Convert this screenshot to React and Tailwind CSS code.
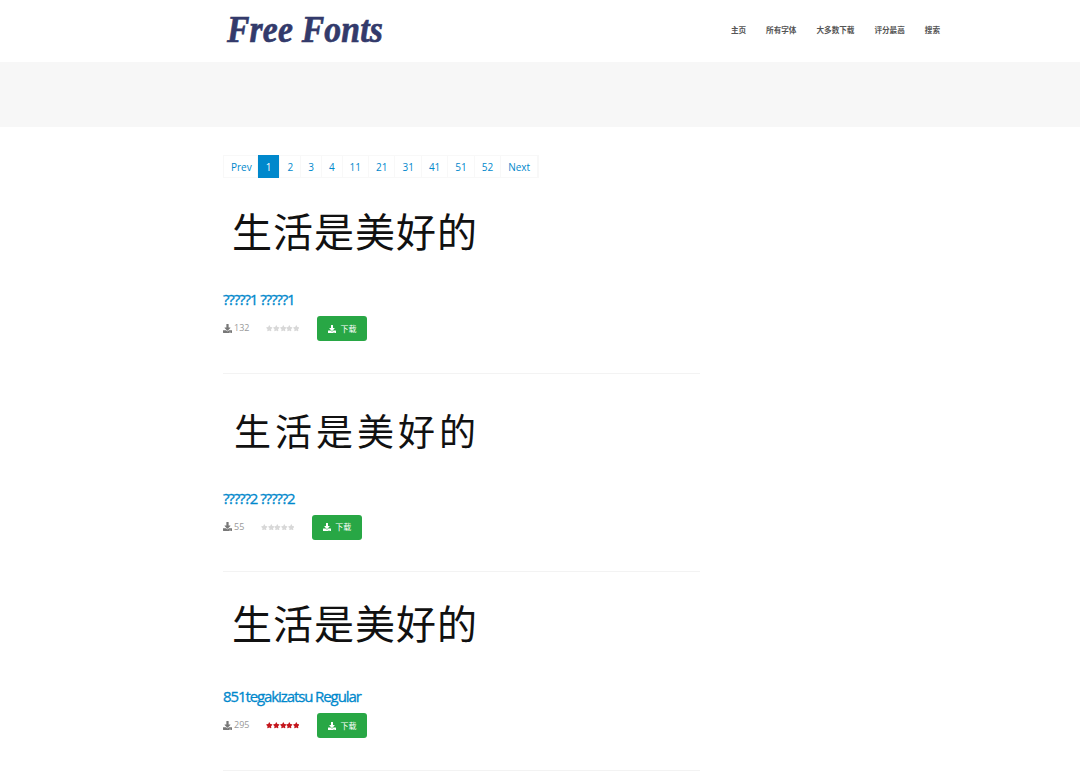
import React from 'react';
import { FaDownload, FaStar } from 'react-icons/fa';

const pages = ['Prev', '1', '2', '3', '4', '11', '21', '31', '41', '51', '52', 'Next'];
const navItems = ['主页', '所有字体', '大多数下载', '评分最高', '搜索'];

const fonts = [
    { name: '?????1 ?????1', count: '132', rated: false, size: 'text-[40px]', preview: 'pl-[9px] pt-[25px] tracking-[1px]' },
    { name: '?????2 ?????2', count: '55', rated: false, size: 'text-[37px]', preview: 'pl-[11px] pt-[26px] tracking-[4px]' },
    { name: '851tegakizatsu Regular', count: '295', rated: true, size: 'text-[40px]', preview: 'pl-[9px] pt-[20px] tracking-[1px]' }
];

function pageClass(page) {
    if (page === '1') return 'px-[8px] bg-[#0088cc] text-white -my-px';
    if (page === 'Prev') return 'pl-[7px] pr-[5px] text-[#0088cc]';
    return 'px-[7px] text-[#0088cc]';
}

function Pagination() {
    return (
        <ul className="flex h-[23px] w-fit border border-[#f8f8f8]">
            {pages.map((page) => (
                <li key={page} className={`flex items-center pt-[2px] text-[10px] border-r border-[#f8f8f8] ${pageClass(page)}`}>
                    {page}
                </li>
            ))}
        </ul>
    );
}

function FontRow({ font }) {
    return (
        <div className="h-[198.5px] border-b border-[#f3f3f3]">
            <div className={`h-[114px] ${font.preview} ${font.size} leading-[60px] text-[#111]`} style={{ fontFamily: '"Noto Sans CJK SC", sans-serif' }}>
                生活是美好的
            </div>
            <h3 className="text-[15px] leading-[20px] font-normal tracking-[-1.1px] text-[#0088cc] [-webkit-text-stroke:0.3px_#0088cc]">{font.name}</h3>
            <div className="flex items-center mt-[7px] h-[25px]">
                <span className="flex items-center gap-[2px] pb-px text-[9px] text-[#999]">
                    <FaDownload className="w-[9px] h-[9px] text-[#777]" />
                    {font.count}
                </span>
                <span className={`flex ml-[17px] ${font.rated ? 'text-[#c4161c]' : 'text-[#d8d8d8]'}`}>
                    {[0, 1, 2, 3, 4].map((i) => (
                        <FaStar key={i} className="w-[6.6px] h-[6.6px]" />
                    ))}
                </span>
                <span className="flex items-center justify-center gap-[4px] ml-[18px] w-[50px] h-[25px] rounded-[3px] bg-[#28a745] text-white text-[8px]">
                    <FaDownload className="w-[8px] h-[8px]" />
                    下载
                </span>
            </div>
        </div>
    );
}

export default function App() {
    return (
        <div className="h-[774px] overflow-hidden bg-white" style={{ fontFamily: '"Open Sans", "Noto Sans CJK SC", sans-serif' }}>
            <header className="h-[62px] flex justify-between items-center pl-[227px] pr-[140px]">
                <div
                    className="-mt-[3px] text-[38px] font-bold italic tracking-[0.2px] text-[#333a6b] origin-left scale-x-[0.885] [-webkit-text-stroke:0.7px_#333a6b]"
                    style={{ fontFamily: '"Liberation Serif", serif' }}
                >
                    Free Fonts
                </div>
                <nav className="flex gap-[20px] text-[7.6px] font-bold text-[#555]">
                    {navItems.map((item) => (
                        <span key={item}>{item}</span>
                    ))}
                </nav>
            </header>
            <div className="h-[65px] bg-[#f7f7f7]" />
            <main className="w-[477px] ml-[223px] pt-[28px]">
                <Pagination />
                <div className="-mt-[3px]">
                    {fonts.map((font) => (
                        <FontRow key={font.name} font={font} />
                    ))}
                </div>
            </main>
        </div>
    );
}
